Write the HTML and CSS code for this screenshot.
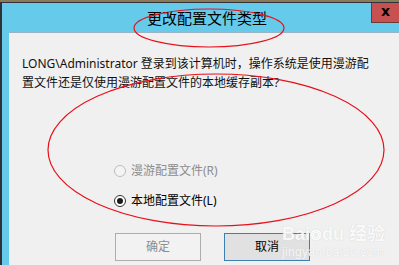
FILE: index.html
```html
<!DOCTYPE html>
<html lang="zh-CN">
<head>
    <meta charset="UTF-8">
    <meta name="viewport" content="width=device-width, initial-scale=1.0">
    <title>更改配置文件类型</title>
    <link rel="stylesheet" href="styles.css">
</head>
<body>

    <div class="window">
        <div class="titlebar">
            <div class="title">更改配置文件类型</div>
            <div class="close">x</div>
        </div>

        <div class="client">
            <p class="message">LONG\Administrator 登录到该计算机时，操作系统是使用漫游配<br>置文件还是仅使用漫游配置文件的本地缓存副本?</p>

            <div class="options">
                <label class="option disabled">
                    <span class="radio"></span>
                    漫游配置文件(R)
                </label>
                <label class="option">
                    <span class="radio checked"></span>
                    本地配置文件(L)
                </label>
            </div>

            <div class="buttons">
                <div class="btn disabled">确定</div>
                <div class="btn focused">取消</div>
            </div>
        </div>
    </div>

    <!-- baidu watermark -->
    <div class="watermark">
        <div class="wm-top">Bai<span class="paw">&#x2742;</span>du 经验</div>
        <div class="wm-bottom">jingyan.baidu.com</div>
    </div>

    <!-- red marks drawn on the screenshot -->
    <svg class="marks" width="399" height="265" viewBox="0 0 399 265">
        <ellipse cx="209" cy="28" rx="75" ry="19" fill="none" stroke="#e8101a" stroke-width="1.2"/>
        <ellipse cx="216" cy="150" rx="168" ry="76" fill="none" stroke="#e8101a" stroke-width="1.2"/>
    </svg>

</body>
</html>
```

FILE: styles.css
```css
body {
    margin: 0;
    width: 399px;
    height: 265px;
    overflow: hidden;
    background-color: #8a7a5c;
    font-family: "Noto Sans", "Noto Sans CJK SC", sans-serif;
    position: relative;
}
.window {
    margin-top: 2px;
    height: 263px;
    background-color: #66cbea;
    border-left: 2px solid #2f3338;
    border-top: 1px solid #2f3338;
    box-sizing: border-box;
    padding-left: 7px;
    display: flex;
    flex-direction: column;
}
.titlebar {
    height: 29px;
    display: flex;
    align-items: flex-start;
}
.title {
    flex: 1;
    padding-left: 138px;
    padding-top: 5px;
    font-size: 15px;
    line-height: 20px;
    color: #000;
    font-family: "Noto Sans CJK SC", sans-serif;
}
.close {
    width: 27px;
    height: 19px;
    background-color: #c75050;
    border-left: 1px solid #6b3a3a;
    border-bottom: 1px solid #6b3a3a;
    color: #000;
    font-family: "DejaVu Sans", sans-serif;
    font-weight: bold;
    font-size: 14px;
    line-height: 17px;
    text-align: center;
}
.client {
    flex: 1;
    background-color: #f0f0f0;
    border-top: 1px solid #9cb4c2;
    padding: 21px 0 0 13px;
}
.message {
    margin: 0;
    font-size: 12px;
    line-height: 19px;
    color: #111;
}
.options {
    margin-top: 70px;
    padding-left: 92px;
    display: flex;
    flex-direction: column;
    gap: 12px;
}
.option {
    display: flex;
    align-items: center;
    gap: 5px;
    font-size: 12px;
    line-height: 18px;
    color: #000;
}
.option.disabled {
    color: #8d8d8d;
}
.radio {
    width: 10px;
    height: 10px;
    border: 1px solid #333;
    border-radius: 50%;
    background-color: #fff;
    position: relative;
}
.option.disabled .radio {
    border-color: #bcbcbc;
    background-color: #f4f4f4;
}
.radio.checked::after {
    content: "";
    position: absolute;
    left: 2px;
    top: 2px;
    width: 6px;
    height: 6px;
    border-radius: 50%;
    background-color: #1a1a1a;
}
.buttons {
    margin-top: 23px;
    padding-left: 93px;
    display: flex;
    gap: 23px;
}
.btn {
    width: 84px;
    height: 26px;
    border: 1px solid #adadad;
    background-color: #f2f2f2;
    font-size: 12px;
    line-height: 26px;
    text-align: center;
    color: #8d8d8d;
}
.btn.focused {
    border-color: #3c7fb1;
    background-color: #e1e1e1;
    color: #000;
}
.watermark {
    position: absolute;
    left: 282px;
    top: 224px;
    color: #fbfbfb;
    text-shadow: 0 0 1px #c8c8c8;
    font-family: "Liberation Sans", "Noto Sans CJK SC", sans-serif;
    opacity: 0.9;
}
.wm-top {
    font-size: 18px;
    font-weight: bold;
    line-height: 20px;
}
.paw {
    font-size: 14px;
}
.wm-bottom {
    font-size: 12px;
    line-height: 14px;
    letter-spacing: 0.3px;
}
.marks {
    position: absolute;
    left: 0;
    top: 0;
    pointer-events: none;
}
```
